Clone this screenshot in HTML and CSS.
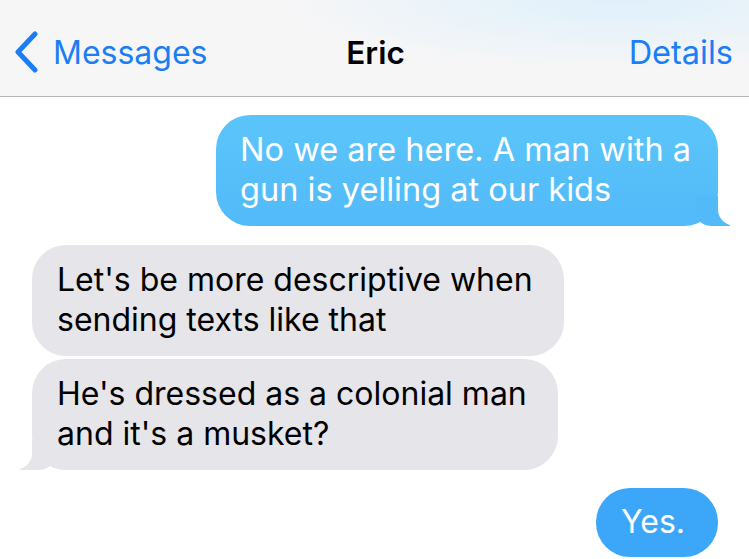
FILE: index.html
```html
<!DOCTYPE html>
<html>
<head>
  <title>Eric</title>
  <link rel="stylesheet" href="styles.css">
</head>
<body>
  <header class="navbar">
    <a class="nav-back" href="#">
      <svg class="chevron" width="30" height="44" viewBox="0 0 30 44">
        <polyline points="21,3 4,21 21,39" fill="none" stroke="#1b7ef5" stroke-width="5" stroke-linecap="round" stroke-linejoin="round"/>
      </svg>
      <span>Messages</span>
    </a>
    <div class="nav-title">Eric</div>
    <a class="nav-details" href="#">Details</a>
  </header>

  <main class="thread">
    <div class="row out">
      <div class="bubble sent tail">No we are here. A man with a<br>gun is yelling at our kids</div>
    </div>
    <div class="row in">
      <div class="bubble received">Let's be more descriptive when<br>sending texts like that</div>
    </div>
    <div class="row in tight">
      <div class="bubble received tail">He's dressed as a colonial man<br>and it's a musket?</div>
    </div>
    <div class="row out last">
      <div class="bubble sent yes">Yes.</div>
    </div>
  </main>
</body>
</html>
```

FILE: styles.css
```css
html, body {
  margin: 0;
  padding: 0;
}

body {
  background: #fff;
  font-family: Inter, "Liberation Sans", Arial, sans-serif;
  overflow: hidden;
}

.navbar {
  height: 97px;
  border-bottom: 1px solid #b4b4b6;
  background:
    radial-gradient(ellipse 340px 70px at 620px 0px, #dff0fb 0%, rgba(235, 244, 250, 0) 100%),
    #f6f6f7;
  display: grid;
  grid-template-columns: 1fr auto 1fr;
  align-items: center;
  padding: 8px 16px 0 14px;
  box-sizing: border-box;
}

.nav-back {
  justify-self: start;
  display: flex;
  align-items: center;
  gap: 9px;
  color: #1b7ef5;
  text-decoration: none;
  font-size: 32px;
}

.chevron {
  display: block;
  margin-top: 2px;
}

.nav-title {
  font-size: 31.5px;
  font-weight: 600;
  color: #000;
  margin-left: 4px;
}

.nav-details {
  justify-self: end;
  color: #1b7ef5;
  text-decoration: none;
  font-size: 32.5px;
}

.thread {
  display: flex;
  flex-direction: column;
  padding: 18px 31px 0 32px;
}

.row {
  display: flex;
  margin-top: 19px;
}

.row:first-child {
  margin-top: 0;
}

.row.tight {
  margin-top: 3px;
}

.row.last {
  margin-top: 18px;
}

.row.out {
  justify-content: flex-end;
}

.bubble {
  position: relative;
  font-size: 32px;
  line-height: 40px;
  border-radius: 34px;
}

.bubble.sent {
  color: #fff;
  font-size: 32.5px;
  padding: 15px 27px 16px 24px;
  background: linear-gradient(#5bc5fa, #52baf9);
}

.bubble.received {
  color: #000;
  padding: 15px 31px 16px 25px;
  background: #e5e5ea;
}

.bubble.yes {
  font-size: 32px;
  background: #3ca6f9;
  padding: 14px 33px 15px 25px;
}

.bubble.sent.tail::before {
  content: "";
  position: absolute;
  right: -12px;
  bottom: 0;
  width: 34px;
  height: 30px;
  background: #53baf9;
  border-bottom-left-radius: 16px 12px;
}

.bubble.sent.tail::after {
  content: "";
  position: absolute;
  right: -30px;
  bottom: 0;
  width: 30px;
  height: 30px;
  background: #fff;
  border-bottom-left-radius: 18px 16px;
}

.bubble.received.tail::before {
  content: "";
  position: absolute;
  left: -12px;
  bottom: 0;
  width: 34px;
  height: 30px;
  background: #e5e5ea;
  border-bottom-right-radius: 16px 12px;
}

.bubble.received.tail::after {
  content: "";
  position: absolute;
  left: -30px;
  bottom: 0;
  width: 30px;
  height: 30px;
  background: #fff;
  border-bottom-right-radius: 18px 16px;
}
```
